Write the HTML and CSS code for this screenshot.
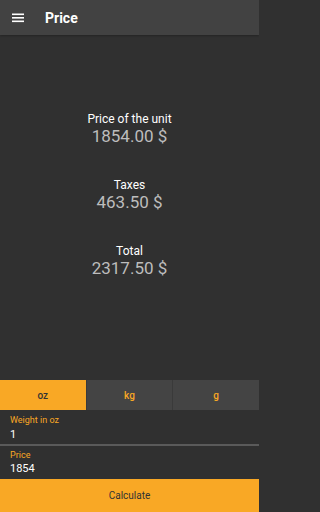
FILE: index.html
```html
<!DOCTYPE html>
<html>
<head>
<meta charset="utf-8">
<link rel="stylesheet" href="styles.css">
</head>
<body>
<div class="app">
  <header class="appbar">
    <svg class="menu" width="12" height="10" viewBox="0 0 12 10">
      <rect x="0" y="0.5" width="12" height="1.6" fill="#fff"/>
      <rect x="0" y="4" width="12" height="1.6" fill="#fff"/>
      <rect x="0" y="7.5" width="12" height="1.6" fill="#fff"/>
    </svg>
    <div class="title">Price</div>
  </header>
  <main class="results">
    <div class="group">
      <div class="label">Price of the unit</div>
      <div class="value">1854.00 $</div>
    </div>
    <div class="group">
      <div class="label">Taxes</div>
      <div class="value">463.50 $</div>
    </div>
    <div class="group">
      <div class="label">Total</div>
      <div class="value">2317.50 $</div>
    </div>
  </main>
  <div class="toggle">
    <div class="opt active">oz</div>
    <div class="opt">kg</div>
    <div class="opt">g</div>
  </div>
  <div class="field first">
    <div class="flabel">Weight in oz</div>
    <div class="fvalue">1</div>
  </div>
  <div class="field second">
    <div class="flabel">Price</div>
    <div class="fvalue">1854</div>
  </div>
  <div class="calc">Calculate</div>
</div>
</body>
</html>
```
FILE: styles.css
```css
html, body {
  margin: 0;
  padding: 0;
  background: #303030;
}
.app {
  width: 259px;
  height: 512px;
  display: flex;
  flex-direction: column;
  font-family: Roboto, "Liberation Sans", sans-serif;
  overflow: hidden;
}
.appbar {
  height: 35px;
  flex: 0 0 35px;
  background: #424242;
  display: flex;
  align-items: center;
  box-shadow: 0 1px 2px rgba(0,0,0,0.25);
  position: relative;
  z-index: 1;
}
.menu {
  margin-left: 12px;
  margin-top: 1px;
}
.title {
  margin-left: 21px;
  color: #fff;
  font-size: 14px;
  font-weight: 700;
  line-height: 16px;
}
.results {
  flex: 1 1 auto;
  display: flex;
  flex-direction: column;
  align-items: center;
  padding-top: 76.5px;
  gap: 32px;
  box-sizing: border-box;
  min-height: 0;
}
.group {
  display: flex;
  flex-direction: column;
  align-items: center;
}
.label {
  color: #fff;
  font-size: 12px;
  line-height: 14px;
}
.value {
  color: #bdbdbd;
  font-size: 17px;
  line-height: 20px;
}
.toggle {
  height: 30px;
  flex: 0 0 30px;
  display: flex;
}
.opt {
  flex: 1;
  background: #444444;
  color: #f9a825;
  font-size: 10px;
  font-weight: 500;
  display: flex;
  align-items: center;
  justify-content: center;
  border-left: 1px solid #3a3a3a;
}
.opt:first-child {
  border-left: none;
}
.opt.active {
  background: #f9a825;
  color: #333;
  border-right: 1px solid #3a3a3a;
}
.opt.active + .opt {
  border-left: none;
}
.field {
  box-sizing: border-box;
  padding: 5px 10px 0;
  background: #303030;
}
.field.first {
  height: 36px;
  flex: 0 0 36px;
  border-bottom: 2px solid #5a5a5a;
}
.field.second {
  height: 33px;
  flex: 0 0 33px;
  padding-top: 3.5px;
}
.flabel {
  color: #f9a825;
  font-size: 9px;
  line-height: 11px;
}
.fvalue {
  color: #fff;
  font-size: 11px;
  line-height: 13px;
  margin-top: 1.5px;
}
.calc {
  flex: 0 0 33px;
  height: 33px;
  background: #f9a825;
  color: #333;
  font-size: 10px;
  display: flex;
  align-items: center;
  justify-content: center;
}
```
